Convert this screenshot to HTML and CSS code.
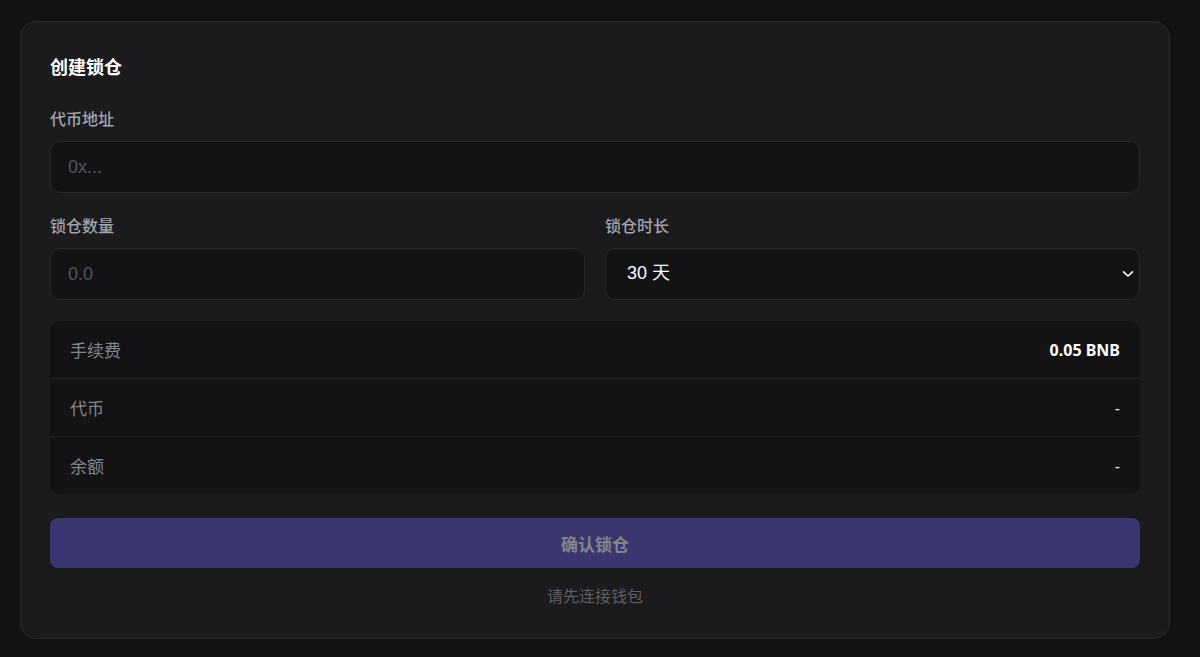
FILE: index.html
```html
<!DOCTYPE html>
<html lang="zh">
<head>
<meta charset="utf-8">
<title>创建锁仓</title>
<link rel="stylesheet" href="styles.css">
</head>
<body>
<div class="card">
  <h2 class="title">创建锁仓</h2>
  <div class="field">
    <label class="label">代币地址</label>
    <input class="input" type="text" placeholder="0x...">
  </div>
  <div class="row2">
    <div class="field">
      <label class="label">锁仓数量</label>
      <input class="input" type="text" placeholder="0.0">
    </div>
    <div class="field">
      <label class="label">锁仓时长</label>
      <div class="select">
        <span>30 天</span>
        <svg class="chev" width="12" height="8" viewBox="0 0 12 8"><path d="M1.5 1.8 L6 6 L10.5 1.8" fill="none" stroke="#ffffff" stroke-width="1.6" stroke-linecap="round" stroke-linejoin="round"/></svg>
      </div>
    </div>
  </div>
  <div class="info">
    <div class="info-row"><span class="k">手续费</span><span class="v strong">0.05 BNB</span></div>
    <div class="info-row"><span class="k">代币</span><span class="v">-</span></div>
    <div class="info-row"><span class="k">余额</span><span class="v">-</span></div>
  </div>
  <button class="btn" type="button">确认锁仓</button>
  <p class="hint">请先连接钱包</p>
</div>
</body>
</html>
```

FILE: styles.css
```css
* { box-sizing: border-box; }
html, body { margin: 0; padding: 0; }
body {
  background: #121214;
  font-family: "Noto Sans", "Noto Sans CJK SC", sans-serif;
  padding: 21px 30px 19px 20px;
}
.card {
  width: 1150px;
  background: #1b1b1d;
  border: 1px solid #29292c;
  border-radius: 16px;
  padding: 29px 29px 30px 29px;
}
.title {
  margin: 0 0 25px 0;
  font-size: 18px;
  line-height: 32px;
  font-weight: 700;
  color: #ffffff;
}
.field { display: flex; flex-direction: column; }
.label {
  font-size: 16px;
  line-height: 22px;
  color: #a3a3ab;
  font-weight: 500;
  margin-bottom: 11px;
}
.input {
  height: 52px;
  background: #131315;
  border: 1px solid #28282b;
  border-radius: 10px;
  padding: 0 17px;
  font-family: "Liberation Sans", "Noto Sans CJK SC", sans-serif;
  font-size: 18px;
  color: #fff;
  outline: none;
  width: 100%;
}
.input::placeholder { color: #56565c; }
.row2 {
  display: grid;
  grid-template-columns: 1fr 1fr;
  gap: 20px;
  margin-top: 22px;
}
.select {
  height: 52px;
  background: #131315;
  border: 1px solid #28282b;
  border-radius: 10px;
  padding: 0 5px 0 21px;
  display: flex;
  align-items: center;
  justify-content: space-between;
  font-family: "Liberation Sans", "Noto Sans CJK SC", sans-serif;
  font-size: 18px;
  line-height: 22px;
  color: #ffffff;
}
.select span { position: relative; top: -1px; }
.chev { display: block; }
.info {
  margin-top: 21px;
  background: #131315;
  border-radius: 10px;
  overflow: hidden;
}
.info-row {
  display: flex;
  justify-content: space-between;
  align-items: center;
  height: 58px;
  padding: 0 20px;
  border-bottom: 1px solid #222225;
}
.info-row:last-child { border-bottom: none; height: 57px; }
.k { font-size: 17px; color: #85858c; }
.v { font-size: 16px; color: #e6e6ea; }
.v.strong { font-weight: 700; color: #ffffff; }
.btn {
  display: block;
  width: 100%;
  height: 50px;
  margin-top: 24px;
  background: #3a3670;
  border: none;
  border-radius: 8px;
  font-family: "Noto Sans", "Noto Sans CJK SC", sans-serif;
  font-size: 17px;
  font-weight: 700;
  color: #85858c;
}
.hint {
  margin: 16px 0 0 0;
  text-align: center;
  font-size: 16px;
  line-height: 24px;
  color: #5e5e64;
}
```
